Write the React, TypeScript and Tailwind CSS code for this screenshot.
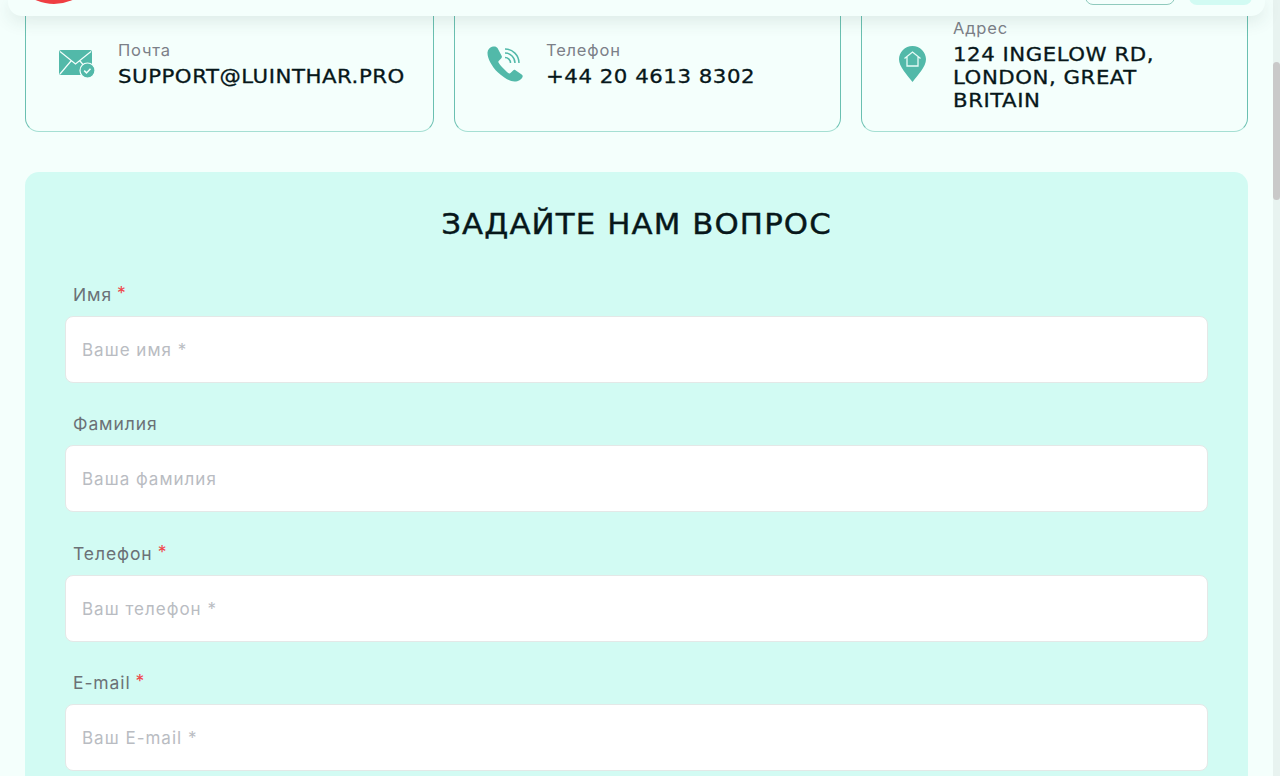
const body = { fontFamily: 'Inter, "Noto Sans", sans-serif' }
const display = { fontFamily: '"DejaVu Sans", sans-serif' }

const fields = [
  { label: 'Имя', placeholder: 'Ваше имя *', required: true },
  { label: 'Фамилия', placeholder: 'Ваша фамилия', required: false },
  { label: 'Телефон', placeholder: 'Ваш телефон *', required: true },
  { label: 'E-mail', placeholder: 'Ваш E-mail *', required: true },
]

function MailIcon() {
  return (
    <svg viewBox="0 0 36 28" className="h-[28px] w-[36px]">
      <rect x="0" y="0" width="33" height="25" rx="2" fill="#52b9a9" />
      <path d="M1 1.500 16.500 14 32 1.500M1 24 12 11M32 24 21 11" fill="none" stroke="#f4fffc" strokeWidth="1.200" />
      <circle cx="28.500" cy="20.500" r="7.500" fill="#52b9a9" stroke="#f4fffc" strokeWidth="1.200" />
      <path d="M25.200 20.600l2.300 2.300 4-4.200" fill="none" stroke="#f4fffc" strokeWidth="1.500" />
    </svg>
  )
}

function PhoneIcon() {
  return (
    <svg viewBox="0 0 36 36" className="h-[36px] w-[36px]">
      <path
        d="M5 .8C3 1.600.6 3.500.5 6.500.3 12 4.500 20 11 26.500c5.500 5 11 8.800 16.500 9 3.500.1 7-2 8-4.500.4-1 .2-1.700-.5-2.300l-6.500-4.500c-.9-.6-1.700-.5-2.400.2l-2.600 2.700c-.6.500-1.200.5-1.800.1-2.600-1.600-8.600-7.800-10.200-10.700-.3-.6-.3-1.100.2-1.600l2.600-2.700c.7-.8.8-1.500.3-2.400L10.500 2C9.500.5 7.500-.1 5 .8Z"
        fill="#52b9a9"
      />
      <path
        d="M18 3A14 14 0 0 1 32 17M18 7A10 10 0 0 1 28 17M18 11.500A5.500 5.500 0 0 1 23.500 17"
        fill="none"
        stroke="#52b9a9"
        strokeWidth="1.500"
      />
    </svg>
  )
}

function PinIcon() {
  return (
    <svg viewBox="0 0 27 36" className="h-[36px] w-[27px]">
      <path d="M13.500 0C6 0 0 6 0 13.300c0 7.500 8 15.500 13.500 22.700C19 28.800 27 20.800 27 13.300 27 6 21 0 13.500 0Z" fill="#52b9a9" />
      <path d="M5.500 12.500 13.500 6l8 6.500M8 10.800V20h11v-9.200" fill="none" stroke="#e6fbf6" strokeWidth="1.300" />
    </svg>
  )
}

function ContactCard({ icon, label, lines, iconClass, textClass }: {
  icon: React.ReactNode
  label: string
  lines: string[]
  iconClass: string
  textClass: string
}) {
  return (
    <div className="flex h-[136px] items-center rounded-[14px] border border-[#6ac0b1] border-b-[#a5dfd3]">
      <div className={iconClass}>{icon}</div>
      <div className={textClass}>
        <div className="text-[16.500px] leading-[22px] tracking-[0.8px] text-[#7c8088]" style={body}>{label}</div>
        <div
          className="mt-[4px] origin-left scale-x-[1.12] whitespace-nowrap text-[19px] leading-[23px] tracking-[0.47px] text-[#07171a] [-webkit-text-stroke:0.3px_#07171a]"
          style={display}
        >
          {lines.map((line) => (
            <div key={line}>{line}</div>
          ))}
        </div>
      </div>
    </div>
  )
}

export default function App() {
  return (
    <div className="flex h-[776px] w-[1280px] overflow-hidden bg-[#f4fffc]">
      <div className="w-[1273px] shrink-0">
        <header className="relative z-10 mx-[8px] flex h-[16px] overflow-hidden rounded-b-[14px] bg-[#f4fffc] shadow-[0_4px_18px_rgba(40,70,60,0.13)]">
          <div className="ml-px mt-[-86px] h-[90px] w-[90px] shrink-0 rounded-full bg-[#ef3e42]" />
          <div className="ml-auto mt-[-20px] h-[25px] w-[90px] rounded-[8px] border border-[#8fcabd]" />
          <div className="ml-[14px] mr-[13px] mt-[-20px] h-[25px] w-[63px] rounded-[8px] bg-[#d2fbf3]" />
        </header>

        <div className="-mt-[20px] grid grid-cols-[409px_387px_387px] gap-[20px] pl-[25px]">
          <ContactCard
            icon={<MailIcon />}
            label="Почта"
            lines={['SUPPORT@LUINTHAR.PRO']}
            iconClass="mb-[1px] ml-[33px] w-[59px] shrink-0"
            textClass="pb-[2px]"
          />
          <ContactCard
            icon={<PhoneIcon />}
            label="Телефон"
            lines={['+44 20 4613 8302']}
            iconClass="ml-[32px] w-[59px] shrink-0"
            textClass="pb-[2px]"
          />
          <ContactCard
            icon={<PinIcon />}
            label="Адрес"
            lines={['124 INGELOW RD,', 'LONDON, GREAT', 'BRITAIN']}
            iconClass="ml-[37px] w-[54px] shrink-0"
            textClass="w-[220px]"
          />
        </div>

        <section className="ml-[25px] mt-[40px] w-[1223px] rounded-[14px] bg-[#d2fbf3] px-[40px] pb-[40px] pt-[33px]">
          <h2
            className="scale-x-[1.12] text-center text-[27.500px] leading-[38px] tracking-[1px] text-[#07171a] [-webkit-text-stroke:0.4px_#07171a]"
            style={display}
          >
            ЗАДАЙТЕ НАМ ВОПРОС
          </h2>
          <div className="mt-[41px] flex flex-col gap-[30.250px]">
            {fields.map((field) => (
              <div key={field.label}>
                <div className="ml-[8px] flex h-[32px] items-start pt-px text-[17.500px] leading-[20px] tracking-[0.9px] text-[#6b7176]" style={body}>
                  {field.label}
                  <span className={field.required ? 'ml-[5px] -mt-[2px] text-[#f0474c]' : 'hidden'}>*</span>
                </div>
                <input
                  className="block h-[67px] w-[1143px] rounded-[8px] border border-[#e4e8e7] bg-white px-[16px] pt-px text-[17px] tracking-[1px] outline-none placeholder:text-[#b9bcc2]"
                  style={body}
                  placeholder={field.placeholder}
                />
              </div>
            ))}
          </div>
        </section>
      </div>

      <div className="h-full w-[7px] shrink-0 bg-[#e8f3f0] pt-[62px]">
        <div className="h-[138px] rounded-[4px] bg-[#c9c9c9]" />
      </div>
    </div>
  )
}
